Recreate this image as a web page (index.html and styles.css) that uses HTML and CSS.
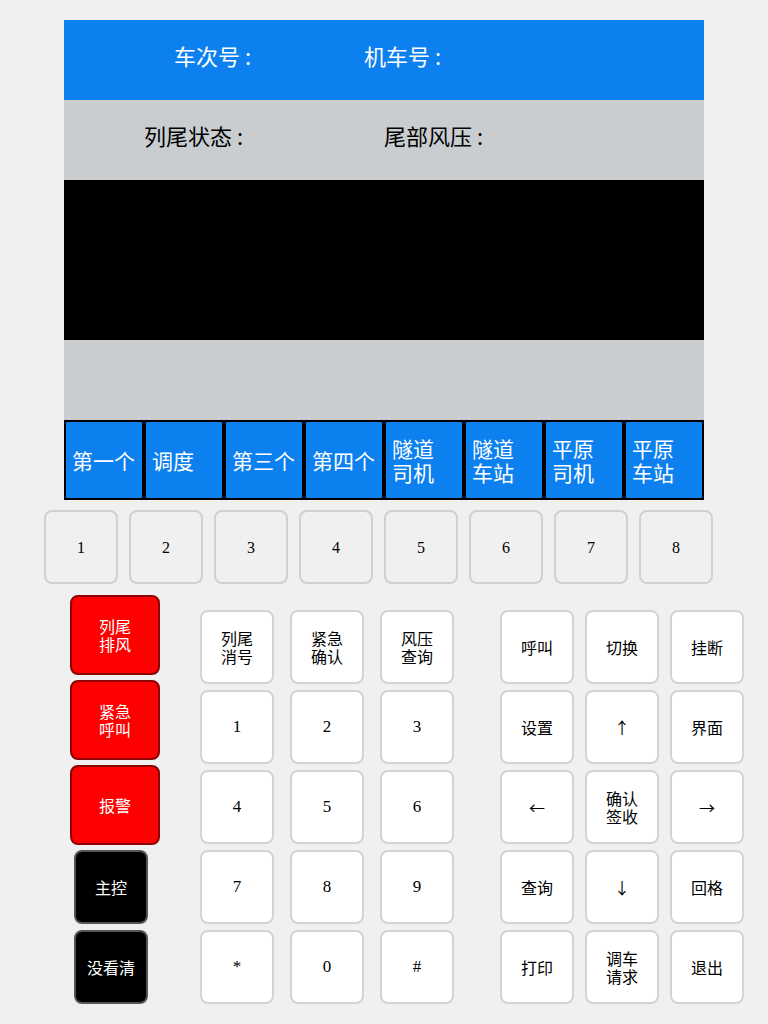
FILE: index.html
```html
<!DOCTYPE html>
<html lang="zh-CN">
<head>
<meta charset="utf-8">
<title>列尾控制</title>
<link rel="stylesheet" href="styles.css">
</head>
<body>
<div class="page">
  <div class="panel">
    <div class="info info-blue">
      <span class="lbl lbl-a">车次号<span class="colon">:</span></span>
      <span class="lbl">机车号<span class="colon">:</span></span>
    </div>
    <div class="info info-grey">
      <span class="lbl lbl-b">列尾状态<span class="colon">:</span></span>
      <span class="lbl">尾部风压<span class="colon">:</span></span>
    </div>
    <div class="screen"></div>
    <div class="spacer"></div>
    <div class="softkeys">
      <div class="sk">第一个</div>
      <div class="sk">调度</div>
      <div class="sk">第三个</div>
      <div class="sk">第四个</div>
      <div class="sk">隧道<br>司机</div>
      <div class="sk">隧道<br>车站</div>
      <div class="sk">平原<br>司机</div>
      <div class="sk">平原<br>车站</div>
    </div>
  </div>

  <div class="numrow">
    <div class="nk">1</div>
    <div class="nk">2</div>
    <div class="nk">3</div>
    <div class="nk">4</div>
    <div class="nk">5</div>
    <div class="nk">6</div>
    <div class="nk">7</div>
    <div class="nk">8</div>
  </div>

  <div class="lower">
    <div class="side">
      <div class="rk">列尾<br>排风</div>
      <div class="rk">紧急<br>呼叫</div>
      <div class="rk">报警</div>
      <div class="bk">主控</div>
      <div class="bk">没看清</div>
    </div>
    <div class="pad pad-mid">
      <div class="k">列尾<br>消号</div>
      <div class="k">紧急<br>确认</div>
      <div class="k">风压<br>查询</div>
      <div class="k num">1</div>
      <div class="k num">2</div>
      <div class="k num">3</div>
      <div class="k num">4</div>
      <div class="k num">5</div>
      <div class="k num">6</div>
      <div class="k num">7</div>
      <div class="k num">8</div>
      <div class="k num">9</div>
      <div class="k num">*</div>
      <div class="k num">0</div>
      <div class="k num">#</div>
    </div>
    <div class="pad pad-right">
      <div class="k">呼叫</div>
      <div class="k">切换</div>
      <div class="k">挂断</div>
      <div class="k">设置</div>
      <div class="k arrow">↑</div>
      <div class="k">界面</div>
      <div class="k arrow">←</div>
      <div class="k">确认<br>签收</div>
      <div class="k arrow">→</div>
      <div class="k">查询</div>
      <div class="k arrow">↓</div>
      <div class="k">回格</div>
      <div class="k">打印</div>
      <div class="k">调车<br>请求</div>
      <div class="k">退出</div>
    </div>
  </div>
</div>
</body>
</html>
```

FILE: styles.css
```css
* { box-sizing: border-box; }
html, body {
  margin: 0;
  padding: 0;
  background: #f0f0f0;
}
body {
  width: 768px;
  height: 1024px;
  overflow: hidden;
  font-family: "Noto Sans CJK SC", "Noto Sans", sans-serif;
}
.page {
  padding-top: 20px;
}
.panel {
  width: 640px;
  margin-left: 64px;
  display: flex;
  flex-direction: column;
}
.info {
  height: 80px;
  display: flex;
  align-items: center;
  padding-bottom: 10px;
  font-size: 22px;
  line-height: 1;
}
.colon {
  margin-left: 5px;
}
.info-blue {
  background: #0d80f0;
  color: #ffffff;
  padding-left: 110px;
}
.info-grey {
  background: #c9cdd0;
  color: #000000;
  padding-left: 80px;
  padding-bottom: 10px;
}
.lbl-a { width: 190px; }
.lbl-b { width: 240px; }
.screen {
  height: 160px;
  background: #000000;
}
.spacer {
  height: 80px;
  background: #c9cdd0;
}
.softkeys {
  display: flex;
  height: 80px;
}
.sk {
  width: 80px;
  height: 80px;
  border: 2px solid #000000;
  background: #0d80f0;
  color: #ffffff;
  font-size: 21px;
  line-height: 24px;
  padding-left: 6px;
  display: flex;
  align-items: center;
}
.numrow {
  display: flex;
  gap: 11px;
  margin-top: 10px;
  margin-left: 44px;
}
.nk {
  width: 74px;
  height: 74px;
  border: 2px solid #d0d0d0;
  border-radius: 8px;
  background: #f0f0f0;
  color: #000000;
  font-family: "Liberation Serif", "Noto Sans CJK SC", serif;
  font-size: 16px;
  display: flex;
  align-items: center;
  justify-content: center;
  padding-top: 2px;
}
.lower {
  display: flex;
  margin-top: 11px;
}
.side {
  width: 90px;
  margin-left: 70px;
  display: flex;
  flex-direction: column;
  gap: 5px;
}
.rk, .bk {
  display: flex;
  align-items: center;
  justify-content: center;
  text-align: center;
  color: #ffffff;
  font-size: 16px;
  line-height: 18px;
  border-radius: 8px;
}
.rk {
  width: 90px;
  height: 80px;
  background: #ff0000;
  border: 2px solid #8b0000;
}
.bk {
  width: 74px;
  height: 74px;
  margin-left: 4px;
  background: #000000;
  border: 2px solid #555555;
}
.bk + .bk { margin-top: 1px; }
.pad {
  display: grid;
  grid-template-columns: repeat(3, 74px);
  grid-auto-rows: 74px;
  row-gap: 6px;
  margin-top: 15px;
}
.pad-mid {
  column-gap: 16px;
  margin-left: 40px;
}
.pad-right {
  column-gap: 11px;
  margin-left: 46px;
}
.k {
  background: #ffffff;
  border: 2px solid #d3d3d3;
  border-radius: 8px;
  display: flex;
  align-items: center;
  justify-content: center;
  text-align: center;
  font-family: "Noto Sans CJK SC", sans-serif;
  font-size: 16px;
  line-height: 18px;
  color: #000000;
}
.k.num {
  font-family: "Liberation Serif", serif;
  font-size: 17px;
}
.k.arrow {
  font-family: "Noto Sans CJK SC", sans-serif;
  font-size: 16px;
}
```
